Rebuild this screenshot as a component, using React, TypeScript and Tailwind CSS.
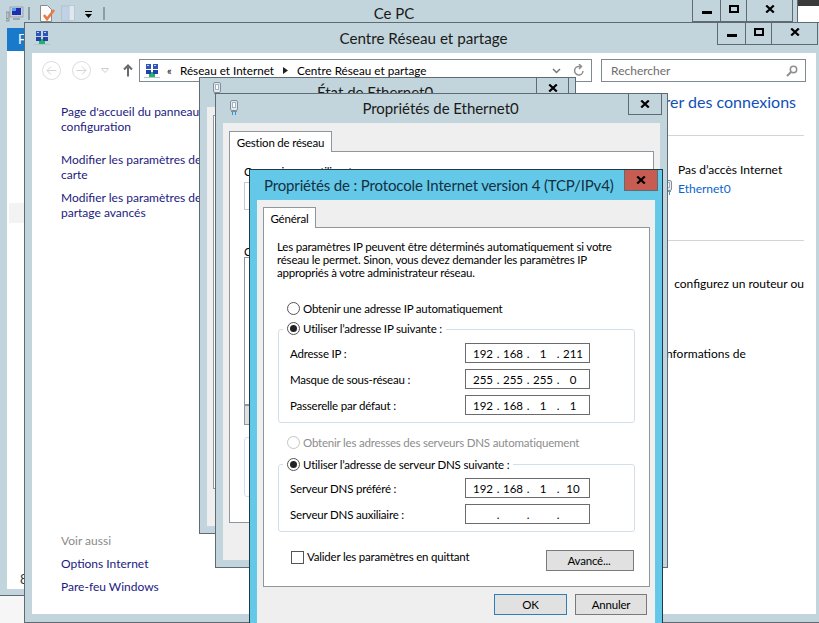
import { ReactNode } from 'react';

const FONT = "font-['Lato',sans-serif]";

function NetworkIcon() {
  return (
    <svg width="16" height="16" viewBox="0 0 16 16" className="block">
      <rect x="2" y="1" width="5" height="5" fill="#2f55b8" />
      <rect x="9" y="1" width="5" height="5" fill="#2f55b8" />
      <rect x="2" y="7" width="5" height="4" fill="#2242a8" />
      <rect x="9" y="7" width="5" height="4" fill="#2242a8" />
      <rect x="3" y="2" width="2" height="1" fill="#b9d4f5" />
      <rect x="10" y="2" width="2" height="1" fill="#b9d4f5" />
      <rect x="5" y="11" width="6" height="3" fill="#1fb36b" />
      <rect x="7" y="9" width="2" height="3" fill="#1fb36b" />
      <rect x="0" y="14" width="16" height="1" fill="#b8c4c8" />
    </svg>
  );
}

function PlugIcon() {
  return (
    <svg width="10" height="16" viewBox="0 0 10 16" className="block">
      <rect x="1.5" y="0.5" width="7" height="10" rx="1.5" fill="#e4ebf0" stroke="#7f8f9e" />
      <rect x="3.5" y="2.5" width="3" height="5" fill="#fff" stroke="#a5b2bc" />
      <rect x="2" y="11" width="6" height="1" fill="#7f8f9e" />
      <rect x="3" y="12" width="1" height="3" fill="#2d9ad6" />
      <rect x="6" y="12" width="1" height="3" fill="#2d9ad6" />
    </svg>
  );
}

function CloseGlyph() {
  return (
    <svg width="10" height="8" viewBox="0 0 10 8" className="block">
      <path d="M1.2 0.5 L8.8 7.5 M8.8 0.5 L1.2 7.5" stroke="#000" strokeWidth="2.2" />
    </svg>
  );
}

function Controls({ className }: { className: string }) {
  return (
    <div className={`absolute flex h-[22px] w-[101px] border border-t-0 border-[#5f6a72] ${className}`}>
      <div className="flex w-[28px] items-center justify-center border-r border-[#5f6a72] pt-[3px]">
        <div className="h-[3px] w-[10px] bg-black" />
      </div>
      <div className="flex w-[26px] items-center justify-center border-r border-[#5f6a72] pb-[3px]">
        <div className="h-[8px] w-[10px] border-2 border-black" />
      </div>
      <div className="flex flex-1 items-center justify-center pb-[3px]">
        <CloseGlyph />
      </div>
    </div>
  );
}

function Radio({ checked, disabled }: { checked?: boolean; disabled?: boolean }) {
  return (
    <div
      className={`flex h-[13px] w-[13px] shrink-0 items-center justify-center rounded-full border bg-white ${
        disabled ? 'border-[#c4c4c4]' : 'border-[#555]'
      }`}
    >
      {checked && <div className="h-[7px] w-[7px] rounded-full bg-[#222]" />}
    </div>
  );
}

function RadioRow({ label, checked, disabled, className }: { label: string; checked?: boolean; disabled?: boolean; className: string }) {
  return (
    <div className={`relative z-10 flex h-[16px] w-fit items-center gap-[3px] bg-white pr-[4px] pl-[4px] ${className}`}>
      <Radio checked={checked} disabled={disabled} />
      <span className={disabled ? 'text-[#8d8d8d]' : 'text-black'}>{label}</span>
    </div>
  );
}

function IpField({ label, parts }: { label: string; parts: string[] }) {
  return (
    <div className="flex h-[20px] items-center">
      <span className="w-[175px]">{label}</span>
      <div className="flex h-[20px] w-[125px] items-center border border-[#6b6b6b] pl-[4px] tracking-normal">
        {parts.map((part, i) => (
          <div key={i} className="flex">
            <span className="w-[26px] text-center">{part}</span>
            {i < 3 && <span className="w-[4px] text-center">.</span>}
          </div>
        ))}
      </div>
    </div>
  );
}

function Group({ children, className }: { children: ReactNode; className: string }) {
  return (
    <div className={`ml-[14px] flex w-[357px] flex-col gap-[6px] rounded-[3px] border border-[#d3dfe6] pt-[13px] pb-[7px] pl-[11px] ${className}`}>
      {children}
    </div>
  );
}

function Window({ className, children }: { className: string; children: ReactNode }) {
  return <div className={`absolute overflow-hidden border ${className}`}>{children}</div>;
}

function SideLink({ children }: { children: ReactNode }) {
  return <div className="text-[#1c1a80]">{children}</div>;
}

function ExplorerWindow() {
  return (
    <Window className="top-[-1px] left-[-1px] h-[597px] w-[799px] border-[#5f6a72] bg-[#c3d5dc]">
      <Controls className="top-0 left-[692px]" />
      <div className="flex h-[27px] items-center pl-[6px]">
        <svg width="18" height="16" viewBox="0 0 18 16" className="block">
          <rect x="0" y="6" width="3" height="9" fill="#b8c2c8" stroke="#667" strokeWidth="0.5" />
          <rect x="1" y="12" width="1" height="1" fill="#3bb54a" />
          <rect x="4" y="1" width="13" height="10" fill="#c5d0d8" stroke="#778" strokeWidth="0.5" />
          <rect x="6" y="2" width="9" height="7" fill="#1a2fb0" />
          <rect x="6" y="2" width="4" height="3" fill="#4fa2ee" />
          <rect x="7" y="12" width="7" height="2" fill="#9aa6ae" />
        </svg>
        <div className="ml-[4px] h-[13px] w-[2px] bg-[#8b9ca4]" />
        <svg width="16" height="17" viewBox="0 0 16 17" className="ml-[9px] block">
          <path d="M1.5 0.5 H8.5 L12.5 4.5 V16.5 H1.5 Z" fill="#fbfbfb" stroke="#8a8a8a" />
          <path d="M5 10 L8 14 L15 5" fill="none" stroke="#e57b45" strokeWidth="2.6" />
        </svg>
        <svg width="14" height="17" viewBox="0 0 14 17" className="ml-[6px] block">
          <rect x="0.5" y="1" width="8" height="15" fill="#c2d2e6" stroke="#b3c2d0" />
          <rect x="8" y="0.5" width="5.5" height="15" fill="#dfe7f0" stroke="#bcc8d4" />
        </svg>
        <svg width="8" height="8" viewBox="0 0 8 8" className="mt-[3px] ml-[10px] block">
          <rect x="0" y="0" width="7" height="1" fill="#000" />
          <path d="M0 3 H7 L3.5 7 Z" fill="#000" />
        </svg>
        <div className="ml-[10px] h-[13px] w-[2px] bg-[#8b9ca4]" />
        <span className="absolute top-[2px] left-[341px] w-[106px] text-center text-[15px] leading-[22px] text-[#1a1a1a]">Ce PC</span>
      </div>
      <div className="absolute top-[28px] left-[7px] flex h-[23px] w-[18px] items-center bg-[#1979ca] pl-[11px] text-[13px] text-white">F</div>
      <div className="absolute top-[51px] left-[7px] h-[538px] w-[785px] bg-white">
        <div className="mt-[152px] ml-[2px] h-[20px] bg-[#f3f3f3]" />
        <div className="absolute top-[519px] left-[13px] text-[13px] text-[#333]">8</div>
      </div>
    </Window>
  );
}

function CenterWindow() {
  return (
    <Window className="top-[22px] left-[24px] h-[601px] w-[810px] border-[#5f6a72] bg-[#c3d5dc]">
      <Controls className="top-0 left-[692px]" />
      <div className="relative flex h-[30px] items-center pl-[9px]">
        <NetworkIcon />
        <span className="absolute top-[4px] left-[0px] w-[797px] text-center text-[15.2px] leading-[22px] text-[#1a1a1a]">Centre Réseau et partage</span>
      </div>
      <div className="ml-[7px] flex h-[561px] w-[784px] flex-col bg-white text-[12px] leading-[15px]">
        <div className="flex h-[29px] items-center pt-[6px]">
          <div className="ml-[10px] flex h-[19px] w-[19px] items-center justify-center rounded-full border border-[#dcdcdc] text-[#d4d4d4]">
            <svg width="11" height="9" viewBox="0 0 11 9"><path d="M5 0.5 L1 4.5 L5 8.5 M1 4.5 H10.5" fill="none" stroke="currentColor" /></svg>
          </div>
          <div className="ml-[11px] flex h-[19px] w-[19px] items-center justify-center rounded-full border border-[#dcdcdc] text-[#d4d4d4]">
            <svg width="11" height="9" viewBox="0 0 11 9"><path d="M6 0.5 L10 4.5 L6 8.5 M10 4.5 H0.5" fill="none" stroke="currentColor" /></svg>
          </div>
          <svg width="8" height="5" viewBox="0 0 8 5" className="ml-[10px]"><path d="M0.5 0.5 H7.5 L4 4.5 Z" fill="none" stroke="#d0d0d0" /></svg>
          <svg width="10" height="13" viewBox="0 0 10 13" className="ml-[14px]"><path d="M5 12.5 V1.5 M1 5.5 L5 1.5 L9 5.5" fill="none" stroke="#6a6a6a" strokeWidth="2" /></svg>
          <div className="ml-[6px] flex h-[23px] w-[453px] items-center border border-[#7f8a90] pl-[4px] text-[11.7px]">
            <NetworkIcon />
            <span className="ml-[7px] w-[6px] text-[11px]">«</span>
            <span className="ml-[7px] w-[100px] whitespace-nowrap text-black">Réseau et Internet</span>
            <svg width="5" height="7" viewBox="0 0 5 7" className="ml-[3px]"><path d="M0 0 L5 3.5 L0 7 Z" fill="#222" /></svg>
            <span className="ml-[9px] w-[255px] whitespace-nowrap text-black">Centre Réseau et partage</span>
            <svg width="9" height="6" viewBox="0 0 9 6"><path d="M1 1 L4.5 4.5 L8 1" fill="none" stroke="#777" strokeWidth="1.5" /></svg>
            <svg width="12" height="13" viewBox="0 0 12 13" className="ml-[12px]"><path d="M10 7 A4.2 4.2 0 1 1 6 2.5 H8 M6 0 L8.5 2.5 L6 5" fill="none" stroke="#8d8d8d" strokeWidth="1.5" /></svg>
          </div>
          <div className="ml-[9px] flex h-[23px] w-[205px] items-center justify-between border border-[#7f8a90] pr-[7px] pl-[9px] text-[#6d6d6d]">
            <span>Rechercher</span>
            <svg width="12" height="12" viewBox="0 0 12 12"><circle cx="7.5" cy="4.5" r="3.2" fill="none" stroke="#8f8f8f" strokeWidth="1.5" /><path d="M5 7 L1 11" stroke="#8f8f8f" strokeWidth="2" /></svg>
          </div>
        </div>
        <div className="flex flex-1">
          <div className="ml-[29px] flex w-[170px] flex-col">
            <div className="mt-[22px] whitespace-nowrap"><SideLink>Page d'accueil du panneau de<br />configuration</SideLink></div>
            <div className="mt-[18px] whitespace-nowrap"><SideLink>Modifier les paramètres de la<br />carte</SideLink></div>
            <div className="mt-[8px] whitespace-nowrap"><SideLink>Modifier les paramètres de<br />partage avancés</SideLink></div>
            <div className="mt-auto mb-[20px] flex flex-col gap-[8px]">
              <span className="text-[#8a8a8a]">Voir aussi</span>
              <SideLink>Options Internet</SideLink>
              <SideLink>Pare-feu Windows</SideLink>
            </div>
          </div>
          <div className="ml-[428px] flex w-[145px] flex-col whitespace-nowrap">
            <div className="flex h-[53px] justify-end pt-[10px] pr-[8px] text-[16px] leading-[20px] text-[#0f50b8]">rer des connexions</div>
            <div className="h-px bg-[#d4d4d4]" />
            <div className="pt-[26px] pl-[19px] text-black">Pas d’accès Internet</div>
            <div className="flex items-center pt-[3px] pl-[4px] text-[#0a66cc]">
              <PlugIcon />
              <span className="ml-[5px]">Ethernet0</span>
            </div>
            <div className="mt-[44px] h-px bg-[#d4d4d4]" />
            <div className="mt-[35px] flex justify-end pl-[1px] text-black">configurez un routeur ou</div>
            <div className="mt-[55px] pl-[7px] text-black">nformations de</div>
          </div>
        </div>
      </div>
    </Window>
  );
}

function StatusWindow() {
  return (
    <Window className="top-[77px] left-[199px] h-[457px] w-[377px] border-[#5f6a72] bg-[#c3d5dc]">
      <div className="relative flex h-[29px] items-start pt-[4px] pl-[12px]">
        <PlugIcon />
        <span className="absolute top-[3px] left-0 w-[350px] text-center text-[15px] leading-[22px] text-[#1a1a1a]">État de Ethernet0</span>
        <div className="absolute top-[-1px] right-[6px] flex h-[22px] w-[33px] items-center justify-center border border-t-0 border-[#5f6a72]">
          <CloseGlyph />
        </div>
      </div>
      <div className="mx-[7px] h-[419px] bg-[#efefef] pt-[8px] pl-[6px]">
        <div className="h-[374px] border border-b border-[#8f979c] bg-white" />
      </div>
    </Window>
  );
}

function EthernetWindow() {
  return (
    <Window className="top-[93px] left-[215px] h-[475px] w-[453px] border-[#5f6a72] bg-[#c3d5dc]">
      <div className="relative flex h-[29px] items-start pt-[6px] pl-[13px]">
        <PlugIcon />
        <span className="absolute top-[3px] left-[0px] w-[451px] pr-[2px] text-center text-[15px] leading-[22px] tracking-[-0.05px] text-[#1a1a1a]">Propriétés de Ethernet0</span>
        <div className="absolute top-[-1px] right-[5px] flex h-[22px] w-[34px] items-center justify-center border border-t-0 border-[#5f6a72]">
          <CloseGlyph />
        </div>
      </div>
      <div className="mx-[7px] h-[437px] bg-[#efefef] pt-[8px] pl-[6px] text-[11.5px] leading-[15px] tracking-[-0.2px]">
        <div className="relative z-10 flex h-[21px] w-[103px] items-center justify-center border border-b-0 border-[#8f979c] bg-white">Gestion de réseau</div>
        <div className="-mt-px h-[372px] w-[425px] border border-[#8f979c] bg-white pt-[12px] pl-[14px]">
          <div className="h-[15px]">Connexion en utilisant :</div>
          <div className="mt-[3px] h-[28px] w-[390px] border border-[#c8c8c8]" />
          <div className="mt-[34px] h-[15px]">Cette connexion utilise les éléments suivants :</div>
          <div className="mt-[-2px] h-[148px] w-[390px] border border-[#8f979c]" />
          <div className="h-[20px] w-[20px] border border-[#8f979c] bg-[#e1e1e1]" />
          <div className="mt-[12px] h-[60px] w-[390px] rounded-[3px] border border-[#d3dfe6]" />
        </div>
      </div>
    </Window>
  );
}

function IpDialog() {
  return (
    <Window className="top-[169px] left-[249px] h-[470px] w-[414px] border-[#1f3a48] bg-[#64c8e9]">
      <div className="relative h-[30px]">
        <span className="absolute top-[4px] left-[14px] text-[15px] leading-[22px] tracking-[-0.15px] whitespace-nowrap text-[#14303f]">Propriétés de : Protocole Internet version 4 (TCP/IPv4)</span>
        <div className="absolute top-[-1px] right-[4px] flex h-[22px] w-[34px] items-center justify-center border border-t-0 border-[#5f6a72] bg-[#c75c52]">
          <CloseGlyph />
        </div>
      </div>
      <div className="mx-[7px] h-[438px] w-[398px] bg-[#efefef] pt-[7px] pl-[6px] text-[11.5px] leading-[13px] tracking-[-0.2px] text-black">
        <div className="relative z-10 flex h-[21px] w-[53px] items-center justify-center border border-b-0 border-[#8f979c] bg-white">Général</div>
        <div className="-mt-px h-[360px] w-[387px] border border-[#8f979c] bg-white">
          <div className="pt-[12px] pl-[13px] whitespace-nowrap">
            Les paramètres IP peuvent être déterminés automatiquement si votre
            <br />
            réseau le permet. Sinon, vous devez demander les paramètres IP
            <br />
            appropriés à votre administrateur réseau.
          </div>
          <RadioRow className="mt-[21px] ml-[19px]" label="Obtenir une adresse IP automatiquement" />
          <RadioRow className="mt-[4px] ml-[19px]" label="Utiliser l’adresse IP suivante :" checked />
          <Group className="-mt-[7px]">
            <IpField label="Adresse IP :" parts={['192', '168', '1', '211']} />
            <IpField label="Masque de sous-réseau :" parts={['255', '255', '255', '0']} />
            <IpField label="Passerelle par défaut :" parts={['192', '168', '1', '1']} />
          </Group>
          <RadioRow className="mt-[11px] ml-[19px]" label="Obtenir les adresses des serveurs DNS automatiquement" disabled />
          <RadioRow className="mt-[6px] ml-[19px]" label="Utiliser l’adresse de serveur DNS suivante :" checked />
          <Group className="-mt-[8px]">
            <IpField label="Serveur DNS préféré :" parts={['192', '168', '1', '10']} />
            <IpField label="Serveur DNS auxiliaire :" parts={['', '', '', '']} />
          </Group>
          <div className="mt-[18px] flex items-start">
            <div className="mt-[1px] ml-[27px] h-[13px] w-[13px] border border-[#555]" />
            <span className="ml-[3px]">Valider les paramètres en quittant</span>
            <div className="mr-[15px] ml-auto flex h-[21px] w-[88px] items-center justify-center border border-[#7a7a7a] bg-[#e1e1e1] pr-[2px]">Avancé...</div>
          </div>
        </div>
        <div className="mt-[7px] flex justify-end gap-[8px] pr-[8px]">
          <div className="flex h-[21px] w-[73px] items-center justify-center border border-[#2d7fb8] bg-[#e1e1e1]">OK</div>
          <div className="flex h-[21px] w-[72px] items-center justify-center border border-[#7a7a7a] bg-[#e1e1e1]">Annuler</div>
        </div>
      </div>
    </Window>
  );
}

export default function App() {
  return (
    <div className={`relative h-[623px] w-[819px] overflow-hidden bg-[#f6f6f6] ${FONT}`}>
      <div className="absolute top-0 right-0 h-[595px] w-[21px] bg-white">
        <div className="h-[6px] bg-[#3a3a3a]" />
      </div>
      <ExplorerWindow />
      <CenterWindow />
      <StatusWindow />
      <EthernetWindow />
      <IpDialog />
    </div>
  );
}
